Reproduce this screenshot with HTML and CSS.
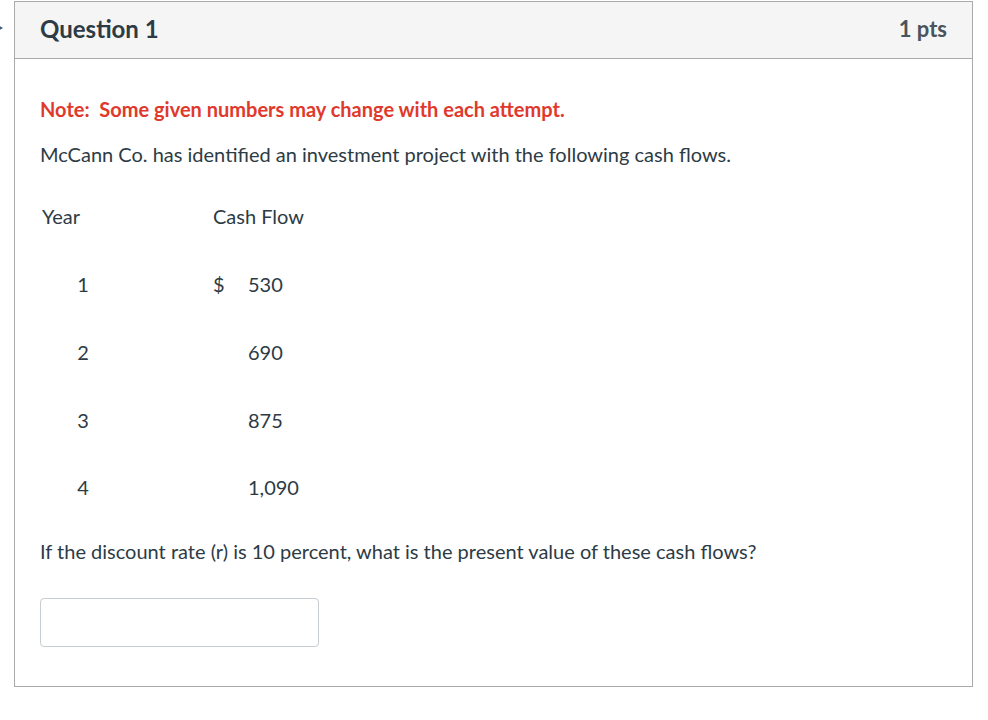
FILE: index.html
```html
<!DOCTYPE html>
<html>
<head>
<meta charset="utf-8">
<link rel="stylesheet" href="styles.css">
</head>
<body>
<div class="page">
  <span class="nav-arrow"></span>
  <div class="question">
    <div class="q-header">
      <span class="q-title">Question 1</span>
      <span class="q-pts">1 pts</span>
    </div>
    <div class="q-body">
      <p class="note">Note:&nbsp; Some given numbers may change with each attempt.</p>
      <p class="text">McCann Co. has identified an investment project with the following cash flows.</p>
      <div class="cf-table">
        <div class="row head">
          <div class="c-year">Year</div>
          <div class="c-dollar">Cash Flow</div>
          <div class="c-val"></div>
        </div>
        <div class="row">
          <div class="c-year"><span class="yr">1</span></div>
          <div class="c-dollar">$</div>
          <div class="c-val">530</div>
        </div>
        <div class="row">
          <div class="c-year"><span class="yr">2</span></div>
          <div class="c-dollar"></div>
          <div class="c-val">690</div>
        </div>
        <div class="row">
          <div class="c-year"><span class="yr">3</span></div>
          <div class="c-dollar"></div>
          <div class="c-val">875</div>
        </div>
        <div class="row">
          <div class="c-year"><span class="yr">4</span></div>
          <div class="c-dollar"></div>
          <div class="c-val">1,090</div>
        </div>
      </div>
      <p class="text ask">If the discount rate (r) is 10 percent, what is the present value of these cash flows?</p>
      <input class="answer" type="text">
    </div>
  </div>
</div>
</body>
</html>
```

FILE: styles.css
```css
html, body {
  margin: 0;
  padding: 0;
  background: #ffffff;
}
body {
  font-family: Lato, "Liberation Sans", sans-serif;
  color: #2d3b45;
}
.page {
  position: relative;
  padding: 1px 0 0 14px;
}
.nav-arrow {
  position: absolute;
  left: -4px;
  top: 24px;
  width: 0;
  height: 0;
  border-top: 4px solid transparent;
  border-bottom: 4px solid transparent;
  border-left: 7px solid #3b5a78;
}
.question {
  width: 957px;
  border: 1px solid #aaaaaa;
  background: #ffffff;
}
.q-header {
  background: #f5f5f5;
  border-bottom: 1px solid #aaaaaa;
  display: flex;
  align-items: center;
  justify-content: space-between;
  padding: 0 25px 4px 25px;
  box-sizing: border-box;
  height: 57px;
}
.q-title {
  font-size: 24px;
  font-weight: 700;
  color: #2d3b45;
}
.q-pts {
  font-size: 22px;
  font-weight: 700;
  color: #4a545c;
}
.q-body {
  padding: 36px 25px 39px 25px;
}
.note {
  margin: 0;
  font-size: 20px;
  font-weight: 700;
  color: #e0392b;
  line-height: 28px;
}
.text {
  margin: 17px 0 0 0;
  font-size: 20px;
  line-height: 28px;
}
.cf-table {
  margin-top: 34px;
  font-size: 20px;
  line-height: 28px;
}
.row {
  display: grid;
  grid-template-columns: 171px 35px auto;
  height: 67.75px;
  align-items: start;
  padding-left: 2px;
}
.row.head {
  height: 68px;
}
.c-year .yr {
  display: inline-block;
  width: 82px;
  text-align: center;
}
.head .c-dollar {
  white-space: nowrap;
}
.ask {
  margin-top: -4px;
}
.answer {
  display: block;
  margin-top: 33px;
  width: 279px;
  height: 49px;
  box-sizing: border-box;
  border: 1px solid #c7cdd1;
  border-radius: 4px;
  background: #fff;
  padding: 0 10px;
  font-family: Lato, sans-serif;
  font-size: 16px;
}
```
